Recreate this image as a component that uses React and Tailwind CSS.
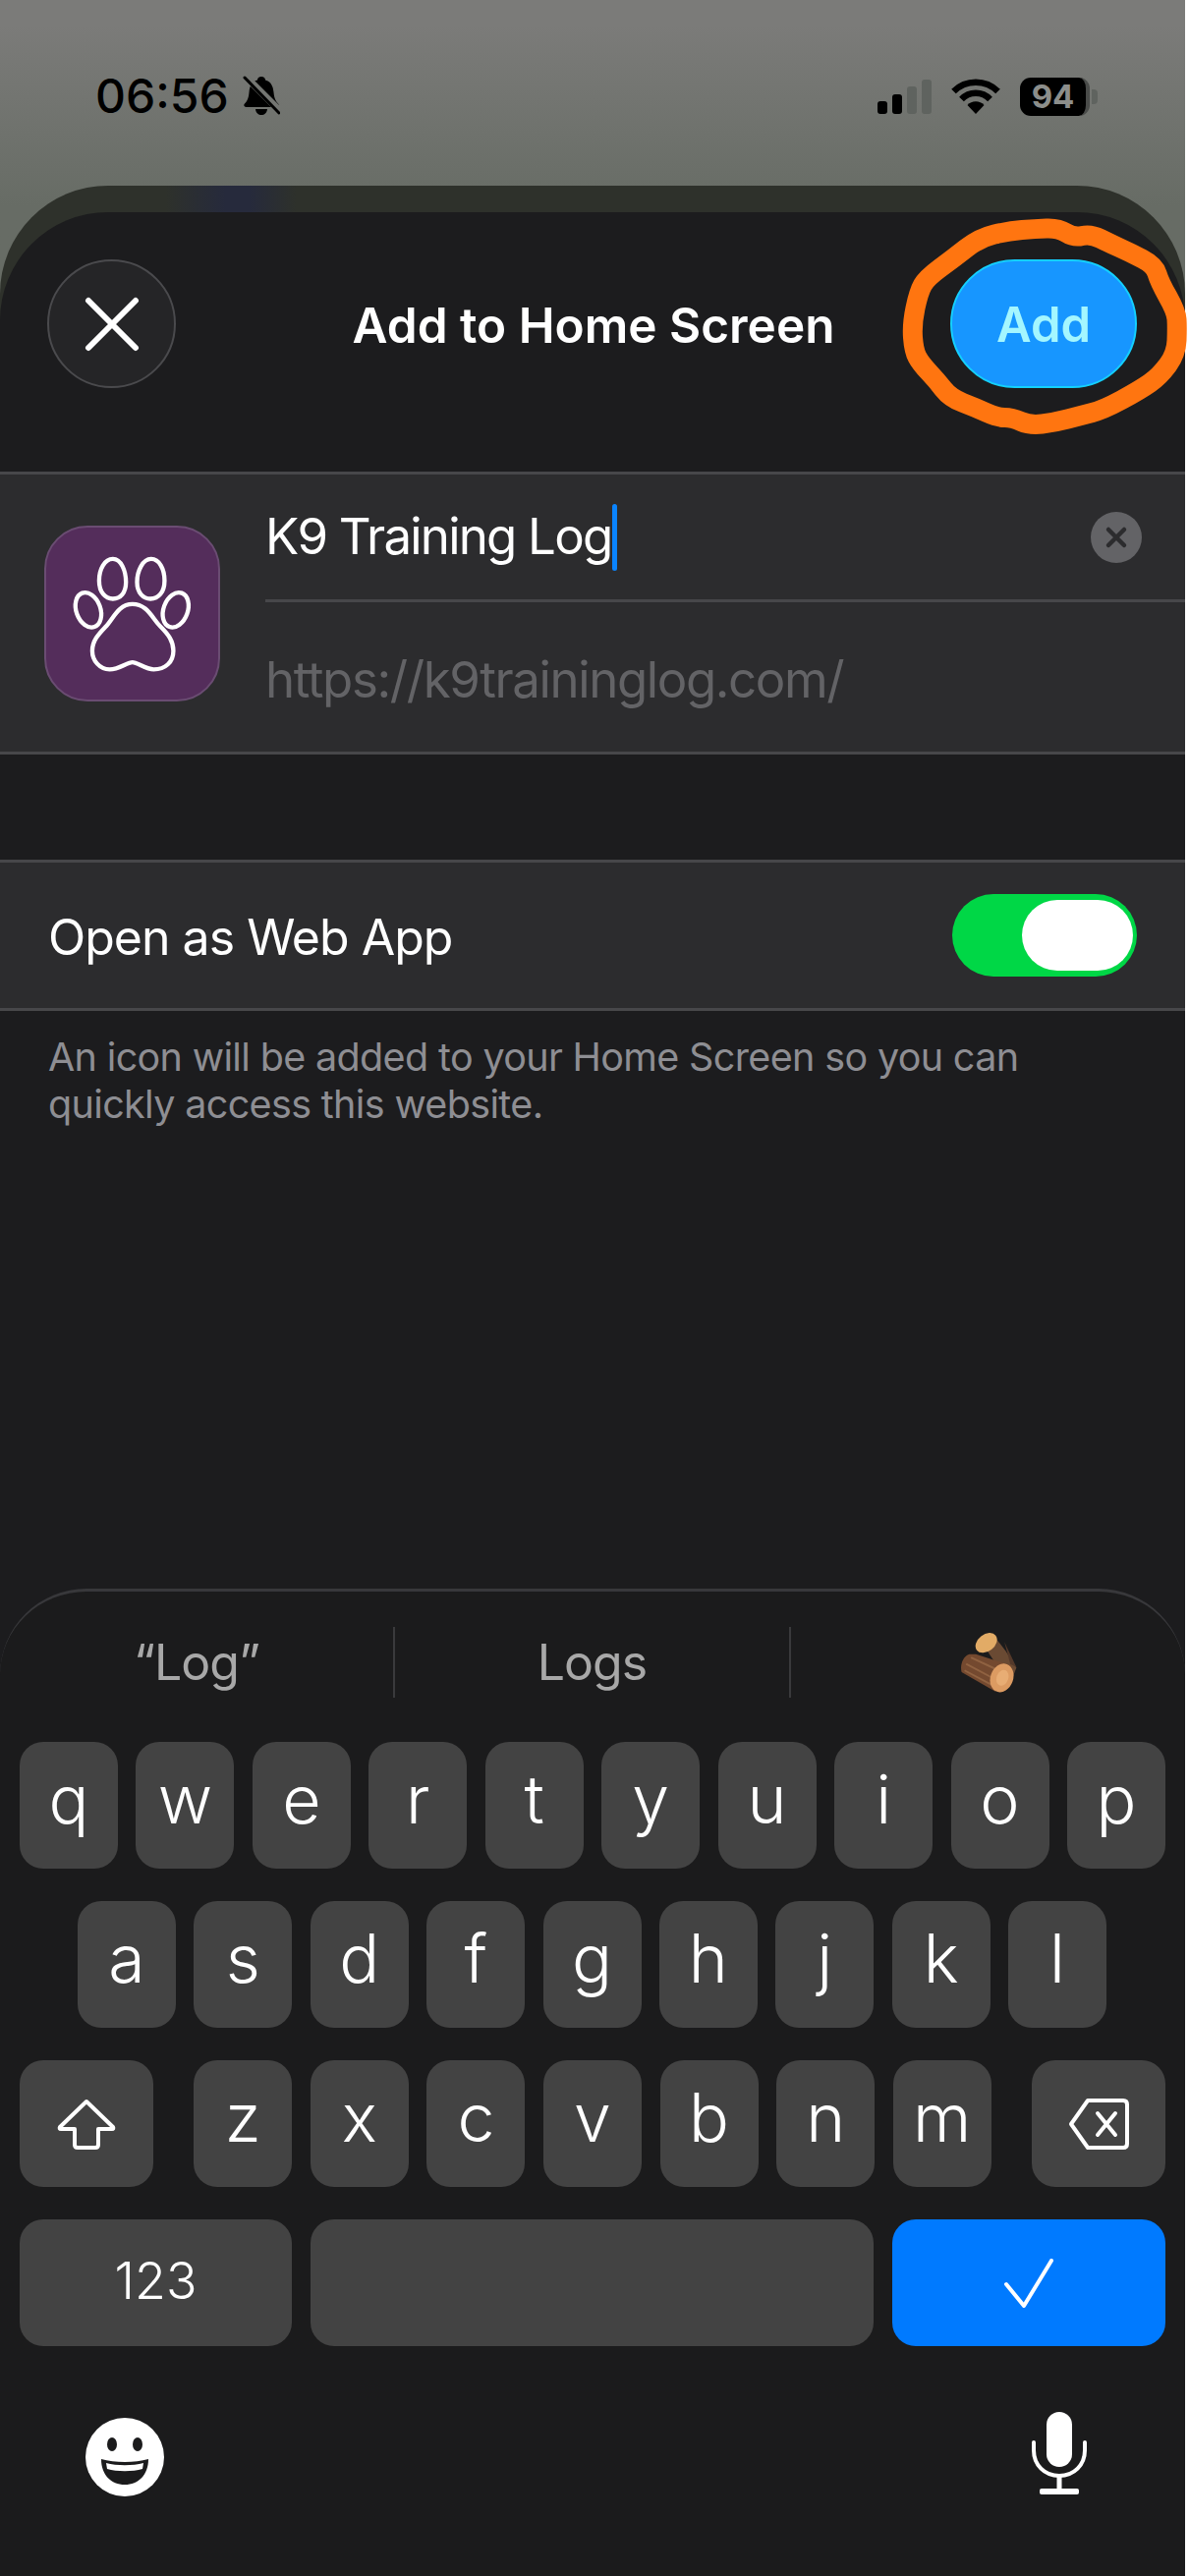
import React from "react";

const font = { fontFamily: "Inter, 'Liberation Sans', sans-serif" };

const scribble = [
  [1077,232],[1093,242],[1110,238],[1130,248],[1150,257],[1175,270],[1180,287],[1197,317],[1198,333],[1197,360],
  [1180,383],[1160,397],[1123,417],[1100,423],[1073,430],[1048,433],[1030,425],[1015,425],[993,415],[967,405],
  [953,387],[937,370],[930,357],[928,330],[935,297],[943,283],[970,263],[997,242],[1027,235],[1053,233],
];

function smoothPath(pts) {
  const mid = (a, b) => [(a[0] + b[0]) / 2, (a[1] + b[1]) / 2];
  const n = pts.length;
  const start = mid(pts[n - 1], pts[0]);
  let d = `M${start[0]} ${start[1]}`;
  for (let i = 0; i < n; i++) {
    const m = mid(pts[i], pts[(i + 1) % n]);
    d += ` Q${pts[i][0]} ${pts[i][1]} ${m[0]} ${m[1]}`;
  }
  return d + "Z";
}

function BellSlash() {
  return (
    <svg width="38" height="40" viewBox="0 0 38 40" className="ml-[14px] mt-[-2px]">
      <path d="M19 1 C21.5 1 23 2.6 23 4.4 C29 6 31 11 31.5 17 C32 23 33.5 26 36 28.5 C37.5 30 36.5 32 34.5 32 L3.5 32 C1.5 32 .5 30 2 28.5 C4.5 26 6 23 6.5 17 C7 11 9 6 15 4.4 C15 2.6 16.5 1 19 1Z" fill="#000" />
      <path d="M13 34 L25 34 C24.5 38 22 40 19 40 C16 40 13.5 38 13 34Z" fill="#000" />
      <path d="M0 -2 L40 38" stroke="#747672" strokeWidth="7" />
      <path d="M2 2 L37 38" stroke="#000" strokeWidth="3" strokeLinecap="round" />
    </svg>
  );
}

function Wifi() {
  return (
    <svg width="50" height="36" viewBox="0 0 50 36" fill="none">
      <path d="M2.5 13 A32 32 0 0 1 47.5 13" stroke="#000" strokeWidth="6.5" />
      <path d="M10.5 21 A20 20 0 0 1 39.5 21" stroke="#000" strokeWidth="6.5" />
      <path d="M16.5 27 A11.5 11.5 0 0 1 33.5 27 L25 36Z" fill="#000" />
    </svg>
  );
}

function StatusBar() {
  return (
    <div className="h-[189px] flex justify-between items-start pl-[97px] pr-[89px] pt-[72px]">
      <div className="flex items-center h-[52px]">
        <span className="text-[48px] leading-none font-medium text-black" style={font}>06:56</span>
        <BellSlash />
      </div>
      <div className="flex items-center h-[52px] gap-[20px]">
        <div className="flex items-end gap-[5px] h-[35px]">
          <div className="w-[10px] h-[13px] rounded-[3px] bg-black" />
          <div className="w-[10px] h-[20px] rounded-[3px] bg-black" />
          <div className="w-[10px] h-[28px] rounded-[3px] bg-[#5f635f]" />
          <div className="w-[10px] h-[35px] rounded-[3px] bg-[#5f635f]" />
        </div>
        <Wifi />
        <div className="flex items-center gap-[2px]">
          <div className="w-[71px] h-[39px] rounded-[11px] bg-black flex items-center justify-center text-[33px] font-bold leading-none text-[#8c8e8b] overflow-hidden border-r-[4px] border-[#4a4c4a]" style={font}>94</div>
          <div className="w-[6px] h-[15px] rounded-r-[4px] bg-[#5f635f]" />
        </div>
      </div>
    </div>
  );
}

function Paw() {
  return (
    <svg viewBox="135 102 538 538" className="w-[179px] h-[179px] shrink-0" fill="none" stroke="#fff" strokeWidth="13">
      <path d="M345 204 C370 204 385 240 385 275 C385 308 368 326 345 326 C322 326 303 306 303 270 C303 235 320 204 345 204Z" />
      <path d="M462 204 C487 204 503 235 503 270 C503 306 484 326 460 326 C438 326 419 308 419 275 C419 240 437 204 462 204Z" />
      <ellipse cx="270" cy="360" rx="37" ry="55" transform="rotate(-20 270 360)" />
      <ellipse cx="537" cy="360" rx="37" ry="55" transform="rotate(20 537 360)" />
      <path d="M405 342 C450 342 465 385 490 410 C515 435 530 455 530 485 C530 520 505 542 470 542 C445 542 420 520 405 520 C388 520 365 542 335 542 C305 542 282 515 282 485 C282 455 300 435 322 412 C345 390 360 342 405 342Z" />
    </svg>
  );
}

function Header() {
  return (
    <div className="h-[264px] flex items-start pt-[48px]">
      <div className="w-[241px] pl-[48px] shrink-0">
        <div className="w-[131px] h-[131px] rounded-full bg-[#252527] border-[2px] border-[#4a4a4d] flex items-center justify-center">
          <svg width="56" height="56" viewBox="0 0 56 56"><path d="M4 4 L52 52 M52 4 L4 52" stroke="#fff" strokeWidth="6" strokeLinecap="round" /></svg>
        </div>
      </div>
      <div className="flex-1 h-[131px] pt-[3px] flex items-center justify-center text-[49.5px] font-semibold text-white" style={font}>Add to Home Screen</div>
      <div className="w-[239px] pr-[49px] shrink-0">
        <div className="w-[190px] h-[131px] rounded-full bg-[#1796ff] border-[2px] border-[#14d0ff] flex items-center justify-center pt-[2px] text-[49px] font-semibold text-[#a4f6ff]" style={font}>Add</div>
      </div>
    </div>
  );
}

function FormGroup() {
  return (
    <div className="h-[288px] bg-[#2c2c2e] border-y-[3px] border-[#47474a] flex">
      <div className="w-[270px] pl-[45px] pt-[52px] shrink-0">
        <div className="w-[179px] h-[179px] rounded-[44px] bg-[#542d5b] border-[2px] border-[#6a4c72] flex items-center justify-center overflow-hidden">
          <Paw />
        </div>
      </div>
      <div className="flex-1 flex flex-col">
        <div className="h-[130px] border-b-[3px] border-[#47474a] flex items-center justify-between pr-[44px]">
          <div className="flex items-center text-[51px] tracking-[-1.8px] text-white" style={font}>
            <span>K9 Training Log</span>
            <span className="w-[5px] h-[68px] rounded-full bg-[#0a84ff] ml-[1px]" />
          </div>
          <div className="w-[52px] h-[52px] rounded-full bg-[#636366] flex items-center justify-center">
            <svg width="24" height="24" viewBox="0 0 24 24"><path d="M4 4 L20 20 M20 4 L4 20" stroke="#2c2c2e" strokeWidth="4.5" strokeLinecap="round" /></svg>
          </div>
        </div>
        <div className="flex-1 flex items-center pt-[7px] text-[51px] tracking-[-1.4px] text-[#636366]" style={font}>https://k9traininglog.com/</div>
      </div>
    </div>
  );
}

function WebAppRow() {
  return (
    <div className="mt-[107px] h-[154px] bg-[#2c2c2e] border-y-[3px] border-[#47474a] flex items-center justify-between pl-[49px] pr-[49px]">
      <span className="text-[50px] tracking-[-1px] pt-[5px] text-white" style={font}>Open as Web App</span>
      <div className="w-[188px] h-[84px] rounded-full bg-[#00d746] flex items-center justify-end pr-[4px]">
        <div className="w-[113px] h-[72px] rounded-full bg-white" />
      </div>
    </div>
  );
}

function Key({ children, w = "w-[100px]", bg = "bg-[#434343]", size = "text-[68px]", pad = "pb-[14px]" }) {
  return (
    <div className={`${w} h-[129px] shrink-0 rounded-[24px] ${bg} flex items-center justify-center text-white font-light leading-none ${pad} ${size}`} style={font}>
      {children}
    </div>
  );
}

function Logs() {
  return (
    <svg viewBox="130 55 195 200" width="65" height="66">
      <path d="M205 90 L240 66 L282 120 L315 172 L300 210 L245 150Z" fill="#6a4a33" />
      <path d="M278 92 L292 122 L315 170 L296 160Z" fill="#54392a" />
      <ellipse cx="222" cy="95" rx="37" ry="26" transform="rotate(-38 222 95)" fill="#e2ab66" />
      <path d="M170 130 C150 135 140 165 146 185 L250 245 L300 165 L190 130Z" fill="#74492f" />
      <path d="M160 160 L245 205 M175 140 L260 180 M155 180 L240 225" stroke="#a77750" strokeWidth="6" opacity=".55" />
      <ellipse cx="270" cy="203" rx="35" ry="45" transform="rotate(20 270 203)" fill="#dc9b62" />
      <ellipse cx="272" cy="203" rx="18" ry="25" transform="rotate(20 272 203)" fill="#e8ad74" />
    </svg>
  );
}

function Keyboard() {
  const row1 = ["q", "w", "e", "r", "t", "y", "u", "i", "o", "p"];
  const row2 = ["a", "s", "d", "f", "g", "h", "j", "k", "l"];
  const row3 = ["z", "x", "c", "v", "b", "n", "m"];
  return (
    <div className="h-[1005px] rounded-t-[88px] border-t-[3px] border-[#38383b] bg-[#1b1b1c] flex flex-col">
      <div className="h-[153px] pt-[36px] flex items-start text-[50px] tracking-[-1px] text-[#a8a8a8]" style={font}>
        <div className="w-[400px] h-[72px] flex items-center justify-center">“Log”</div>
        <div className="w-[2px] h-[72px] bg-[#3a3a3c]" />
        <div className="w-[401px] h-[72px] flex items-center justify-center">Logs</div>
        <div className="w-[2px] h-[72px] bg-[#3a3a3c]" />
        <div className="flex-1 h-[72px] flex items-center justify-center"><Logs /></div>
      </div>
      <div className="flex flex-col gap-[33px]">
        <div className="flex justify-between px-[20px]">
          {row1.map((k) => <Key key={k}>{k}</Key>)}
        </div>
        <div className="flex justify-between pl-[79px] pr-[80px]">
          {row2.map((k) => <Key key={k}>{k}</Key>)}
        </div>
        <div className="flex justify-between px-[20px]">
          <Key w="w-[136px]">
            <svg width="60" height="52" viewBox="0 0 60 52" fill="none" stroke="#fff" strokeWidth="4" strokeLinejoin="round" className="mt-[14px]">
              <path d="M30 3 L57 29 Q58 31 56 31 L42 31 L42 47 Q42 50 39 50 L21 50 Q18 50 18 47 L18 31 L4 31 Q2 31 3 29Z" />
            </svg>
          </Key>
          <div className="flex gap-[18.6px]">
            {row3.map((k) => <Key key={k}>{k}</Key>)}
          </div>
          <Key w="w-[136px]">
            <svg width="62" height="52" viewBox="0 0 62 52" fill="none" stroke="#fff" strokeWidth="4" strokeLinejoin="round" strokeLinecap="round" className="mt-[14px]">
              <path d="M20 2 L56 2 Q60 2 60 6 L60 46 Q60 50 56 50 L20 50 L3 26Z" />
              <path d="M30 15 L48 37 M48 15 L30 37" />
            </svg>
          </Key>
        </div>
        <div className="flex justify-between px-[20px]">
          <Key w="w-[277px]" size="text-[52px]" pad="pb-[4px]">123</Key>
          <Key w="w-[573px]"> </Key>
          <Key w="w-[278px]" bg="bg-[#007aff]">
            <svg width="50" height="50" viewBox="0 0 50 50" fill="none" stroke="#fff" strokeWidth="4" strokeLinecap="round" strokeLinejoin="round" className="mt-[14px]">
              <path d="M2 26 L20 48 L48 2" />
            </svg>
          </Key>
        </div>
      </div>
      <div className="flex-1 flex justify-between items-start pl-[87px] pr-[99px] pt-[73px]">
        <svg width="80" height="80" viewBox="0 0 80 80">
          <circle cx="40" cy="40" r="40" fill="#fff" />
          <ellipse cx="27" cy="27" rx="5" ry="7" fill="#1b1b1c" />
          <ellipse cx="53" cy="27" rx="5" ry="7" fill="#1b1b1c" />
          <path d="M16 42 C30 46 50 46 64 42 C64 58 54 68 40 68 C26 68 16 58 16 42Z" fill="#1b1b1c" />
          <path d="M21 46 C32 49 48 49 59 46 L58 52 C48 55 32 55 22 52Z" fill="#fff" />
        </svg>
        <svg width="58" height="86" viewBox="0 0 58 86" fill="none" className="mt-[-7px]">
          <rect x="16" y="1" width="26" height="56" rx="13" fill="#fff" />
          <path d="M3 32 L3 40 C3 55 14 66 29 66 C44 66 55 55 55 40 L55 32" stroke="#fff" strokeWidth="4" strokeLinecap="round" />
          <path d="M29 66 L29 80" stroke="#fff" strokeWidth="5" />
          <rect x="9" y="79" width="40" height="6" rx="2" fill="#fff" />
        </svg>
      </div>
    </div>
  );
}

export default function App() {
  return (
    <div className="relative w-[1210px] h-[2622px] overflow-hidden bg-white">
      <div className="w-[1206px] h-[2622px] flex flex-col bg-gradient-to-b from-[#7b7b79] from-[1%] to-[#676c65] to-[8%]">
        <StatusBar />
        <div className="flex-1 rounded-t-[110px] bg-[linear-gradient(90deg,#2e312b_14%,#262a3c_19%,#262a3c_21%,#2e312b_25%)] pt-[27px] flex flex-col">
          <div className="flex-1 rounded-t-[110px] bg-[#1c1c1e] flex flex-col">
            <Header />
            <FormGroup />
            <WebAppRow />
            <p className="pl-[49px] pt-[23px] text-[39.5px] tracking-[-0.65px] leading-[48px] text-[#8e8e93]" style={font}>
              An icon will be added to your Home Screen so you can<br />quickly access this website.
            </p>
            <div className="flex-1" />
            <Keyboard />
          </div>
        </div>
      </div>
      <svg className="absolute left-0 top-0" width="1210" height="480" fill="none">
        <path d={smoothPath(scribble)} stroke="#ff7510" strokeWidth="20" strokeLinejoin="round" />
      </svg>
    </div>
  );
}
